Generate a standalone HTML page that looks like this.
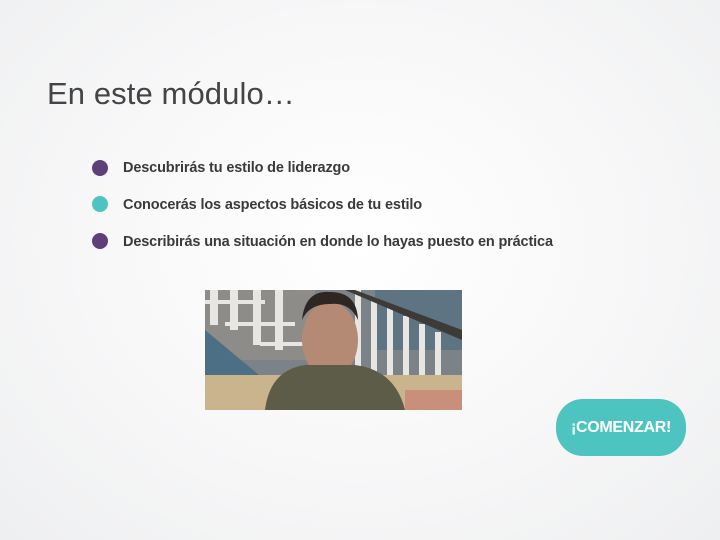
<!DOCTYPE html>
<html><head><meta charset="utf-8"><style>
html,body{margin:0;padding:0}
body{width:720px;height:540px;overflow:hidden;position:relative;font-family:"Liberation Sans",sans-serif;
background:radial-gradient(ellipse at 50% 45%,#ffffff 0%,#f7f7f8 55%,#eeeff0 100%);}
.t{position:absolute;left:47px;top:76px;font-size:31px;color:#444446;white-space:nowrap;letter-spacing:0.1px}
.li{position:absolute;left:123px;font-size:14.5px;font-weight:bold;color:#3a3a3c;white-space:nowrap;letter-spacing:-0.15px}
.d{position:absolute;left:92px;width:16px;height:16px;border-radius:50%}
.img{position:absolute;left:205px;top:290px;width:257px;height:120px;overflow:hidden;background:#8a8f94}
.btn{position:absolute;left:556px;top:399px;width:130px;height:57px;border-radius:27px;background:#4dc4c0;color:#fff;font-weight:bold;font-size:16px;line-height:57px;text-align:center;letter-spacing:-0.3px}
</style></head><body>
<div class="t">En este módulo…</div>
<div class="d" style="top:160px;background:#5e3f78"></div>
<div class="li" style="top:160px">Descubrirás tu estilo de liderazgo</div>
<div class="d" style="top:196px;background:#4dc4c0"></div>
<div class="li" style="top:197px">Conocerás los aspectos básicos de tu estilo</div>
<div class="d" style="top:233px;background:#5e3f78"></div>
<div class="li" style="top:234px">Describirás una situación en donde lo hayas puesto en práctica</div>
<div class="img">
<svg width="257" height="120" viewBox="0 0 257 120">
<rect width="257" height="120" fill="#7b8288"/>
<rect x="0" y="0" width="110" height="70" fill="#8e8c88"/>
<polygon points="0,40 60,90 0,100" fill="#4d6f86"/>
<rect x="170" y="0" width="87" height="60" fill="#5f7482"/>
<g fill="#e8e6e2"><rect x="5" y="0" width="8" height="35"/><rect x="25" y="0" width="8" height="40"/><rect x="48" y="0" width="8" height="55"/><rect x="70" y="0" width="8" height="60"/><rect x="0" y="10" width="60" height="4"/><rect x="20" y="32" width="70" height="4"/><rect x="55" y="52" width="45" height="4"/>
<rect x="150" y="0" width="6" height="90"/><rect x="166" y="8" width="6" height="85"/><rect x="182" y="16" width="6" height="80"/><rect x="198" y="26" width="6" height="75"/><rect x="214" y="34" width="6" height="70"/><rect x="230" y="42" width="6" height="65"/></g>
<polygon points="140,0 257,50 257,40 150,0" fill="#3d3a38"/>
<rect x="0" y="85" width="257" height="35" fill="#c9b48e"/>
<rect x="200" y="100" width="57" height="20" fill="#c98f7a"/>
<ellipse cx="125" cy="50" rx="28" ry="38" fill="#b48a74"/>
<path d="M97 30 Q100 0 125 2 Q152 2 153 30 Q145 12 125 14 Q104 14 97 30Z" fill="#2e2622"/>
<path d="M60 120 Q65 80 100 75 L150 75 Q190 80 200 120Z" fill="#5c5c48"/>
</svg>
</div>
<div class="btn">¡COMENZAR!</div>
</body></html>
